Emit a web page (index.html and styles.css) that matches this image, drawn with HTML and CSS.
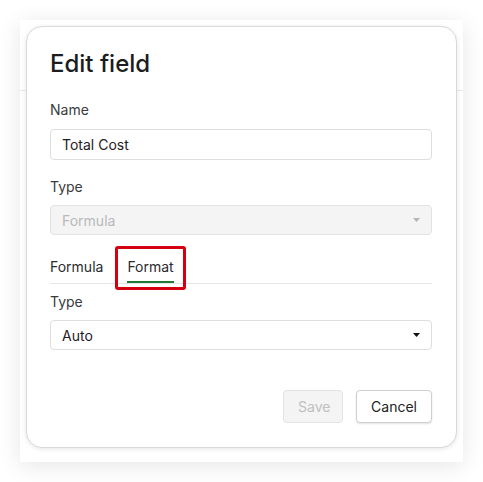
FILE: index.html
```html
<!DOCTYPE html>
<html>
<head>
<meta charset="utf-8">
<link rel="stylesheet" href="styles.css">
</head>
<body>
<div class="stage">
  <div class="panel">
    <div class="card">
      <h1 class="title">Edit field</h1>
      <label class="label label-first">Name</label>
      <div class="input">Total Cost</div>
      <label class="label">Type</label>
      <div class="select select-disabled">
        <span>Formula</span>
        <svg class="caret" width="7" height="4" viewBox="0 0 7 4"><path d="M0 0 L7 0 L3.5 4 Z"/></svg>
      </div>
      <div class="tabs">
        <div class="tab">Formula</div>
        <div class="tab tab-active">Format<span class="highlight"></span></div>
      </div>
      <label class="label label-after-tabs">Type</label>
      <div class="select">
        <span>Auto</span>
        <svg class="caret" width="7" height="4" viewBox="0 0 7 4"><path d="M0 0 L7 0 L3.5 4 Z"/></svg>
      </div>
      <div class="actions">
        <button class="btn btn-disabled">Save</button>
        <button class="btn">Cancel</button>
      </div>
    </div>
  </div>
</div>
</body>
</html>
```
FILE: styles.css
```css
* { box-sizing: border-box; }
html, body { margin: 0; padding: 0; background: #fff; }
body { font-family: Inter, "Noto Sans", sans-serif; color: #1f2023; }
.stage { padding: 20px; width: 483px; height: 482px; }
.panel {
  width: 443px; height: 442px; padding: 6px;
  background: linear-gradient(to bottom, transparent 70px, #e8e8e8 70px, #e8e8e8 71px, transparent 71px), #fff;
  box-shadow: 0 4px 22px rgba(0,0,0,0.10);
}
.card {
  width: 431px; height: 422px;
  background: #fff;
  border: 1px solid #d9d9d9;
  border-radius: 16px;
  box-shadow: 0 1px 5px rgba(0,0,0,0.10);
  padding: 21px 24px 24px 23px;
  display: flex; flex-direction: column;
}
.title { margin: 0 0 -1px; font-size: 24px; line-height: 32px; font-weight: 500; color: #1b1d21; letter-spacing: 0; }
.label { display: block; font-size: 14px; line-height: 20px; color: #3a3b3d; margin-top: 17px; }
.label-first { margin-top: 21px; }
.label-after-tabs { margin-top: 8px; }
.input, .select {
  margin-top: 9px; height: 31px; width: 382px;
  border: 1px solid #dedede; border-radius: 4px;
  padding: 0 11px; font-size: 14px; line-height: 29px; color: #1f2023;
  display: flex; align-items: center; justify-content: space-between;
}
.select { margin-top: 8px; height: 30px; }
.select-disabled { background: #f4f4f4; color: #b9b9b9; border-color: #e2e2e2; }
.select-disabled .caret path { fill: #b5b5b5; }
.caret { margin-right: 0; }
.caret path { fill: #111; }
.tabs {
  margin-top: 19px; display: flex; gap: 24px; width: 382px;
  border-bottom: 1px solid #e6e6e6;
}
.tab { font-size: 14px; line-height: 20px; padding: 3px 0 4px; color: #2a2b2e; border-bottom: 2px solid transparent; position: relative; }
.tab-active { border-bottom-color: #1e7b34; }
.highlight {
  position: absolute; left: -12px; right: -12px; top: -8px; bottom: -9px;
  border: 3px solid #d4000f; border-radius: 3px;
}
.actions { margin-top: auto; display: flex; justify-content: flex-end; gap: 13px; width: 382px; }
.btn {
  height: 33px; padding: 0 14px; font-family: inherit; font-size: 14px;
  background: #fff; border: 1px solid #cfcfcf; border-radius: 4px; color: #222;
  box-shadow: 0 1px 2px rgba(0,0,0,0.12);
}
.btn-disabled { background: #f4f4f4; border-color: #e3e3e3; color: #c0c0c0; box-shadow: none; width: 60px; }
```
